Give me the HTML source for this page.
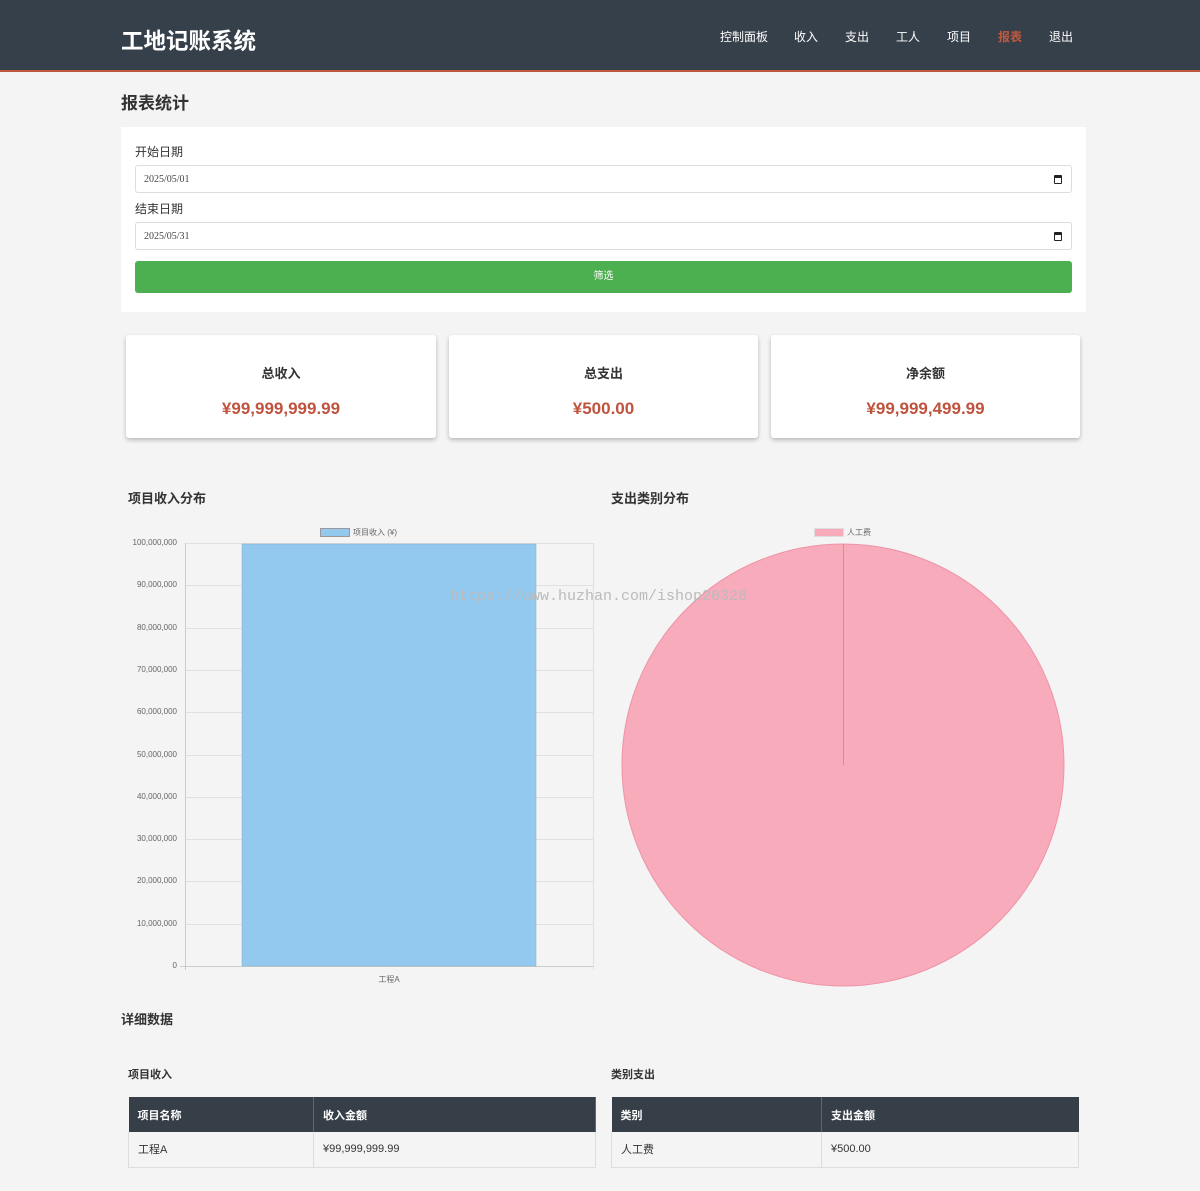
<!DOCTYPE html>
<html><head><meta charset="utf-8">
<style>
*{margin:0;padding:0;box-sizing:border-box}
body{width:1200px;height:1191px;background:#f4f4f4;font-family:"Liberation Sans","Noto Sans CJK SC",sans-serif;color:#333;position:relative;overflow:hidden}
.a{position:absolute}
.hdr{left:0;top:0;width:1200px;background:#36404a;border-bottom:2px solid #c0583e;height:72px}
.t{color:#fff;font-size:22.5px;font-weight:bold;left:121px;top:24px}
.nav{top:28px;font-size:12px;color:#fff}
.card{background:#fff}
.lbl{font-size:12px;color:#333}
.inp{background:#fff;border:1px solid #ddd;border-radius:3px;height:28px;font-family:"Liberation Serif",serif;font-size:10px;color:#444;padding:8px 0 0 8px}
.cal{position:absolute;right:9px;top:9px;width:8px;height:9px;border:1.5px solid #222;border-top-width:3px;border-radius:1px}
.stat{background:#fff;box-shadow:0 2px 4px rgba(0,0,0,.25);border-radius:3px;text-align:center}
.stat h3{font-size:13px;margin-top:28px;color:#333}
.stat p{font-size:17px;font-weight:bold;color:#c0533e;margin-top:17px}
.h{font-size:13px;font-weight:bold;color:#333}
.yl{font-size:8px;color:#666;width:60px;text-align:right;left:117px}
table{border-collapse:collapse;font-size:11px}
th{background:#363f48;color:#fff;text-align:left;height:35px;padding-left:9px;font-weight:bold;border-right:1px solid #666}
td{height:35px;padding-left:9px;border-right:1px solid #ddd;border-bottom:1px solid #ddd;color:#333}
</style></head><body>
<div class="a hdr"></div>
<div class="a t">工地记账系统</div>
<div class="a nav" style="left:720px">控制面板</div>
<div class="a nav" style="left:794px">收入</div>
<div class="a nav" style="left:845px">支出</div>
<div class="a nav" style="left:896px">工人</div>
<div class="a nav" style="left:947px">项目</div>
<div class="a nav" style="left:998px;color:#c0583e;font-weight:bold">报表</div>
<div class="a nav" style="left:1049px">退出</div>

<div class="a" style="left:121px;top:89px;font-size:17px;font-weight:bold">报表统计</div>
<div class="a card" style="left:121px;top:127px;width:965px;height:185px"></div>
<div class="a lbl" style="left:135px;top:143px">开始日期</div>
<div class="a inp" style="left:135px;top:165px;width:937px">2025/05/01<div class="cal"></div></div>
<div class="a lbl" style="left:135px;top:200px">结束日期</div>
<div class="a inp" style="left:135px;top:222px;width:937px">2025/05/31<div class="cal"></div></div>
<div class="a" style="left:135px;top:261px;width:937px;height:32px;background:#4caf50;border-radius:3px;color:#fff;font-size:10px;text-align:center;line-height:32px">筛选</div>

<div class="a stat" style="left:126px;top:335px;width:310px;height:103px"><h3>总收入</h3><p>¥99,999,999.99</p></div>
<div class="a stat" style="left:449px;top:335px;width:309px;height:103px"><h3>总支出</h3><p>¥500.00</p></div>
<div class="a stat" style="left:771px;top:335px;width:309px;height:103px"><h3>净余额</h3><p>¥99,999,499.99</p></div>

<div class="a h" style="left:128px;top:488px">项目收入分布</div>
<div class="a h" style="left:611px;top:488px">支出类别分布</div>

<svg class="a" style="left:0;top:0" width="1200" height="1191">
<g stroke="#e0e0e0" stroke-width="1">
<line x1="185" y1="543.5" x2="593" y2="543.5"/><line x1="185" y1="585.5" x2="593" y2="585.5"/><line x1="185" y1="628.5" x2="593" y2="628.5"/><line x1="185" y1="670.5" x2="593" y2="670.5"/><line x1="185" y1="712.5" x2="593" y2="712.5"/><line x1="185" y1="755.5" x2="593" y2="755.5"/><line x1="185" y1="797.5" x2="593" y2="797.5"/><line x1="185" y1="839.5" x2="593" y2="839.5"/><line x1="185" y1="881.5" x2="593" y2="881.5"/><line x1="185" y1="924.5" x2="593" y2="924.5"/>
<line x1="593.5" y1="543" x2="593.5" y2="970"/>
</g>
<line x1="185.5" y1="543" x2="185.5" y2="970" stroke="#ccc"/>
<line x1="180" y1="966.5" x2="593" y2="966.5" stroke="#ccc"/>
<rect x="242" y="544" width="294" height="422" fill="#93c9ef" stroke="#8ab" stroke-width="0.5"/>
<rect x="320.5" y="528.5" width="29" height="8" fill="#93c9ef" stroke="#999"/>
<text x="353" y="535" font-size="8" fill="#666" font-family="Liberation Sans,Noto Sans CJK SC,sans-serif">项目收入 (¥)</text>
<text x="389" y="982" font-size="8" fill="#666" text-anchor="middle" font-family="Liberation Sans,Noto Sans CJK SC,sans-serif">工程A</text>
<circle cx="843" cy="765" r="221" fill="#f8abbb" stroke="#ee93a6" stroke-width="1"/>
<line x1="843.5" y1="544" x2="843.5" y2="765" stroke="#d98a9a"/>
<rect x="814.5" y="528.5" width="29" height="8" fill="#f8abbb" stroke="#ddd"/>
<text x="847" y="535" font-size="8" fill="#666" font-family="Liberation Sans,Noto Sans CJK SC,sans-serif">人工费</text>
<text x="450" y="600" font-size="15" fill="#bbb" font-family="Liberation Mono,monospace">https://www.huzhan.com/ishop20328</text>
</svg>
<div class="a yl" style="top:538px">100,000,000</div>
<div class="a yl" style="top:580px">90,000,000</div>
<div class="a yl" style="top:623px">80,000,000</div>
<div class="a yl" style="top:665px">70,000,000</div>
<div class="a yl" style="top:707px">60,000,000</div>
<div class="a yl" style="top:750px">50,000,000</div>
<div class="a yl" style="top:792px">40,000,000</div>
<div class="a yl" style="top:834px">30,000,000</div>
<div class="a yl" style="top:876px">20,000,000</div>
<div class="a yl" style="top:919px">10,000,000</div>
<div class="a yl" style="top:961px">0</div>

<div class="a h" style="left:121px;top:1009px">详细数据</div>
<div class="a" style="left:128px;top:1066px;font-size:11px;font-weight:bold">项目收入</div>
<div class="a" style="left:611px;top:1066px;font-size:11px;font-weight:bold">类别支出</div>
<table class="a" style="left:128px;top:1097px;width:468px">
<tr><th style="width:185px">项目名称</th><th>收入金额</th></tr>
<tr><td style="border-left:1px solid #ddd">工程A</td><td>¥99,999,999.99</td></tr></table>
<table class="a" style="left:611px;top:1097px;width:468px">
<tr><th style="width:210px">类别</th><th style="border-right:none">支出金额</th></tr>
<tr><td style="border-left:1px solid #ddd">人工费</td><td>¥500.00</td></tr></table>
</body></html>
